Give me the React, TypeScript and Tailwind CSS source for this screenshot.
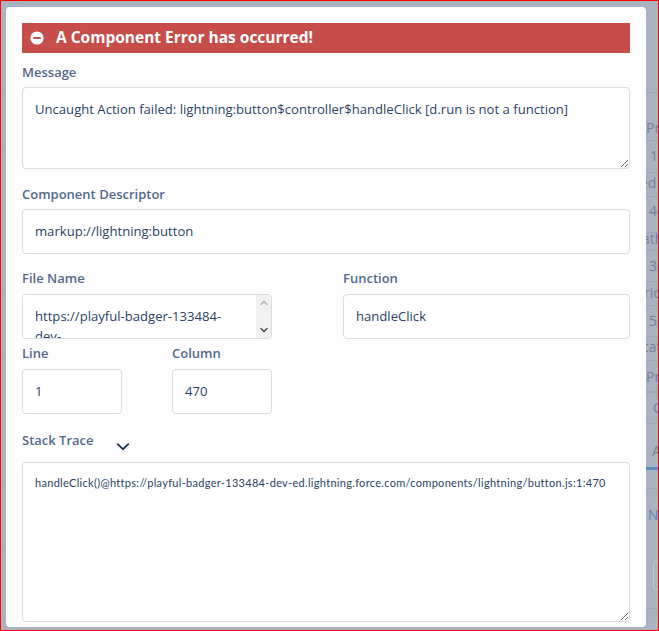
import { ChevronDown, ChevronUp } from 'lucide-react';

const labelClass = 'block text-[13px] leading-[18px] font-semibold text-[#54698d]';
const fieldClass =
    'block rounded-[4px] border border-[#d8dde6] bg-white px-3 pb-[2px] text-[13.1px] text-[#2b3f66] outline-none';

// rows of the page behind the modal, seen in the strip to its right
const rightRows = [
    { text: '', className: 'h-[92px] border-b border-[#9ea9b6]' },
    { text: 'Pr', className: 'h-[48px] border-b border-[#9ea9b6] pt-[26px]' },
    { text: '1', className: 'h-[32px] border-b border-[#9ea9b6] pt-[6px] pl-[4px]' },
    { text: 'ed', className: 'h-[24px] border-b border-[#9ea9b6] pt-[1px] -ml-[6px]' },
    { text: '4', className: 'h-[36px] border-b border-[#9ea9b6] pt-[5px] pl-[3px]' },
    { text: 'ath', className: 'h-[18px] border-b border-[#9ea9b6] pt-[1px] -ml-[4px] leading-[10px]' },
    { text: '3', className: 'h-[31px] border-b border-[#9ea9b6] pt-[6px] pl-[3px]' },
    { text: 'ric', className: 'h-[24px] border-b border-[#9ea9b6] pt-[2px] -ml-[2px]' },
    { text: '5', className: 'h-[31px] border-b border-[#9ea9b6] pt-[6px] pl-[3px]' },
    { text: 'cat', className: 'h-[24px] border-b border-[#9ea9b6] pt-[1px] -ml-[4px]' },
    { text: 'Pr', className: 'h-[32px] border-b-2 border-[#98a6b8] pt-[7px]' },
    { text: 'C', className: 'h-[31px] border-b border-[#9ea9b6] pt-[6px] pl-[7px] text-[#6f83a8]' },
    { text: 'A', className: 'h-[46px] border-b-[3px] border-[#5f8dbd] pt-[18px] pl-[6px]' },
    { text: '', className: 'h-[19px] border-b border-[#9ea9b6]' },
    { text: 'N', box: true, className: 'h-[120px] border-b border-[#9ea9b6] pt-[17px] pl-[2px] text-[#5f86b5]' },
];

export default function App() {
    return (
        <div
            className="flex h-[631px] w-[659px] overflow-hidden border border-[#ff0000] bg-[#a9b3bf] font-['Open_Sans',sans-serif]"
        >
            {/* Page behind, left strip */}
            <div className="w-[5px] shrink-0">
                <div className="h-[92px] border-b border-[#a2adba]" />
                <div className="h-[56px] border-b border-[#a2adba]" />
                <div className="h-[144px] border-b border-[#a2adba]" />
                <div className="h-[64px] border-b border-[#a2adba]" />
                <div className="h-[128px] border-b border-[#a2adba]" />
                <div className="h-[63px] border-b border-[#a2adba]" />
            </div>

            {/* Error modal */}
            <div className="mt-[6px] h-[620px] w-[640px] shrink-0 rounded-[4px] bg-[#fdfdfd] p-4">
                <div className="flex h-[30px] items-center bg-[#c74d4a] pl-2 text-white">
                    <svg viewBox="0 0 14 14" className="h-[14px] w-[14px] shrink-0">
                        <circle cx="7" cy="7" r="6.6" fill="#ffffff" />
                        <rect x="3.2" y="5.9" width="7.6" height="2.2" rx="0.6" fill="#c74d4a" />
                    </svg>
                    <h2 className="ml-[12px] text-[15.5px] font-bold">A Component Error has occurred!</h2>
                </div>

                <label className={`${labelClass} mt-[10px] mb-[6px]`}>Message</label>
                <textarea
                    readOnly
                    defaultValue="Uncaught Action failed: lightning:button$controller$handleClick [d.run is not a function]"
                    className={`${fieldClass} h-[82px] w-full resize-y pt-[11px] leading-[20px]`}
                />

                <label className={`${labelClass} mt-4 mb-[6px]`}>Component Descriptor</label>
                <input readOnly defaultValue="markup://lightning:button" className={`${fieldClass} h-[45px] w-full`} />

                <div className="mt-[15px] grid grid-cols-[250px_287px] gap-x-[71px]">
                    <div>
                        <label className={`${labelClass} mb-[7px]`}>File Name</label>
                        <div className="flex h-[45px] overflow-hidden rounded-[4px] border border-[#d8dde6] bg-white">
                            <textarea
                                readOnly
                                defaultValue={'https://playful-badger-133484-\ndev-\ned.lightning.force.com/components/lightning/button.js'}
                                className="min-w-0 flex-1 resize-none overflow-hidden bg-white pt-[11px] pl-3 text-[13.1px] leading-[20px] text-[#2b3f66] outline-none"
                            />
                            <div className="flex w-[15px] shrink-0 flex-col items-center justify-between bg-[#f1f1f1] py-[2px]">
                                <ChevronUp className="h-3 w-3 text-[#b5b5b5]" strokeWidth={3} />
                                <ChevronDown className="h-3 w-3 text-[#505050]" strokeWidth={3} />
                            </div>
                        </div>
                    </div>
                    <div>
                        <label className={`${labelClass} mb-[7px]`}>Function</label>
                        <input readOnly defaultValue="handleClick" className={`${fieldClass} h-[45px] w-full`} />
                    </div>
                </div>

                <div className="mt-[5px] flex gap-[50px]">
                    <div className="w-[100px]">
                        <label className={`${labelClass} mb-[7px]`}>Line</label>
                        <input readOnly defaultValue="1" className={`${fieldClass} h-[45px] w-full`} />
                    </div>
                    <div className="w-[100px]">
                        <label className={`${labelClass} mb-[7px]`}>Column</label>
                        <input readOnly defaultValue="470" className={`${fieldClass} h-[45px] w-full`} />
                    </div>
                </div>

                <div className="mt-[17px] mb-[5px] flex h-[26px] items-start">
                    <label className={labelClass}>Stack Trace</label>
                    <svg viewBox="0 0 14 9" fill="none" className="mt-[11px] ml-[22px] h-[9px] w-[14px]">
                        <path d="M1.2 1.6 7 7.2l5.8-5.6" stroke="#16325c" strokeWidth="1.7" />
                    </svg>
                </div>
                <textarea
                    readOnly
                    defaultValue="handleClick()@https://playful-badger-133484-dev-ed.lightning.force.com/components/lightning/button.js:1:470"
                    className="block h-[160px] w-full resize-y rounded-[4px] border border-[#d8dde6] bg-white px-3 pt-[11px] font-['Lato',sans-serif] text-[11px] leading-[18px] tracking-[0.3px] text-[#2b3f66] outline-none"
                />
            </div>

            {/* Page behind, right strip */}
            <div className="w-[12px] shrink-0 overflow-hidden text-[14px] leading-[18px] text-[#76839a]">
                {rightRows.map((row, index) => (
                    <div key={index} className={`whitespace-nowrap ${row.className}`}>
                        {row.text}
                        {row.box && (
                            <div className="mt-[37px] ml-[5px] h-[29px] w-[20px] rounded-l-[4px] border border-[#c1c8d2] bg-[#a9b3bf]" />
                        )}
                    </div>
                ))}
            </div>
        </div>
    );
}
